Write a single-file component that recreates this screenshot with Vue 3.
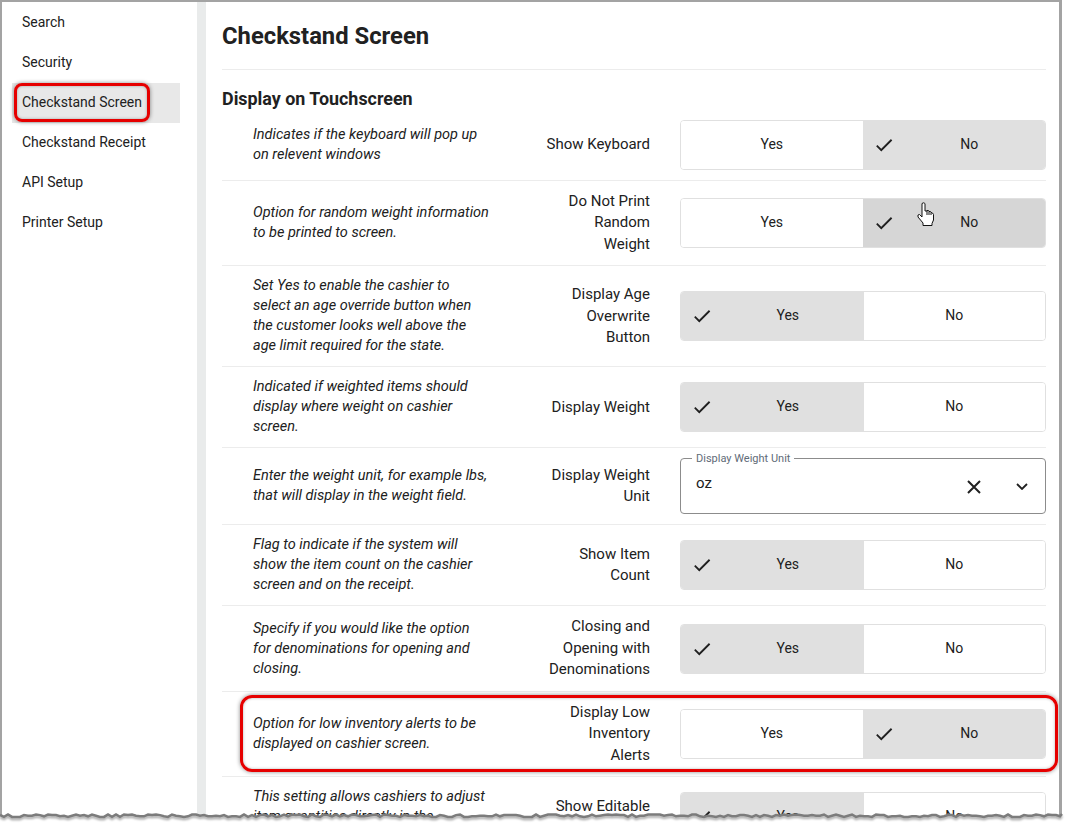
<script setup>
const navItems = ['Search', 'Security', 'Checkstand Screen', 'Checkstand Receipt', 'API Setup', 'Printer Setup']

const settings = [
  { text: 'Indicates if the keyboard will pop up on relevent windows', label: 'Show Keyboard', value: 'No' },
  { text: 'Option for random weight information to be printed to screen.', label: 'Do Not Print Random Weight', value: 'No', hover: true },
  { text: 'Set Yes to enable the cashier to select an age override button when the customer looks well above the age limit required for the state.', label: 'Display Age Overwrite Button', value: 'Yes' },
  { text: 'Indicated if weighted items should display where weight on cashier screen.', label: 'Display Weight', value: 'Yes' },
  { text: 'Enter the weight unit, for example lbs, that will display in the weight field.', label: 'Display Weight Unit', select: 'oz' },
  { text: 'Flag to indicate if the system will show the item count on the cashier screen and on the receipt.', label: 'Show Item Count', value: 'Yes' },
  { text: 'Specify if you would like the option for denominations for opening and closing.', label: 'Closing and Opening with Denominations', value: 'Yes' },
  { text: 'Option for low inventory alerts to be displayed on cashier screen.', label: 'Display Low Inventory Alerts', value: 'No' },
  { text: 'This setting allows cashiers to adjust item quantities directly in the checkstand screen.', label: 'Show Editable Quantity', value: 'Yes' }
]

// rough torn paper edge along the bottom of the screenshot
function tornEdge() {
  let seed = 7
  let d = 'M0 15'
  for (let x = 4; x < 1062; x += 4) {
    seed = (seed * 137 + 59) % 251
    d += ` L${x} ${14.5 + (seed % 5) * 0.6}`
  }
  return d + ' L1062 14'
}
const edge = tornEdge()
</script>

<template>
  <div class="page">
    <div class="frame">
      <aside class="sidebar">
        <a
          v-for="item in navItems"
          :key="item"
          class="nav-item"
          :class="{ active: item === 'Checkstand Screen' }"
        >{{ item }}</a>
      </aside>

      <main class="content">
        <h1>Checkstand Screen</h1>
        <h2>Display on Touchscreen</h2>

        <div v-for="s in settings" :key="s.label" class="row">
          <p class="desc">{{ s.text }}</p>
          <div class="label">{{ s.label }}</div>

          <fieldset v-if="s.select" class="select">
            <legend>{{ s.label }}</legend>
            <span class="select-value">{{ s.select }}</span>
            <svg class="clear-icon" viewBox="0 0 14 14" width="14" height="14">
              <path d="M1 1 L13 13 M13 1 L1 13" />
            </svg>
            <svg class="chevron-icon" viewBox="0 0 12 7" width="12" height="7">
              <path d="M1 1 L6 6 L11 1" />
            </svg>
          </fieldset>

          <div v-else class="toggle" :class="{ hover: s.hover }">
            <button
              v-for="opt in ['Yes', 'No']"
              :key="opt"
              class="toggle-btn"
              :class="{ on: s.value === opt }"
            >
              <svg v-if="s.value === opt" class="check" viewBox="0 0 24 24" width="22" height="22">
                <path d="M9 16.17L4.83 12l-1.41 1.41L9 19 21 7l-1.41-1.41z" />
              </svg>
              <span class="toggle-text">{{ opt }}</span>
            </button>
          </div>
        </div>
      </main>

      <!-- annotations drawn on top of the screenshot -->
      <div class="callout callout-nav"></div>
      <div class="callout callout-row"></div>

      <svg class="cursor" viewBox="0 0 18 24" width="18" height="24">
        <path d="M5.5 1 C6.5 0.5 8 1 8 2 L8 9 L10 9 L10 8.5 L11.5 8.5 L12 9.5 L13.5 9.5 L14 10.5 L15.5 11 L16.5 12.5 L16.5 18 L15 21.5 L15 23.5 L6 23.5 L6 21 L1 15 L1 13 L2.5 12.5 L5 15 L5 2 Z" />
        <path class="cursor-lines" d="M10 9 L10 13 M12 9.5 L12 13 M14 10.5 L14 13" />
      </svg>
    </div>

    <svg class="torn" viewBox="0 0 1071 29" width="1071" height="29">
      <path class="torn-fill" :d="edge + ' L1071 14 L1071 29 L0 29 Z'" />
      <path class="torn-line" :d="edge" />
    </svg>
  </div>
</template>

<style>
html, body {
  margin: 0;
  background: #fff;
  overflow: hidden;
}
</style>

<style scoped>
.page {
  position: relative;
  width: 1071px;
  height: 829px;
  overflow: hidden;
  background: #fff;
  font-family: Roboto, "Liberation Sans", sans-serif;
  color: #212121;
}

.frame {
  position: relative;
  box-sizing: border-box;
  width: 1062px;
  height: 829px;
  display: flex;
  overflow: hidden;
  background: #fff;
  border: 2px solid #a3a3a3;
  border-right-width: 3px;
  border-bottom: none;
}

.sidebar {
  box-sizing: border-box;
  width: 195px;
  flex-shrink: 0;
  padding: 1px 17px 0 10px;
}

.nav-item {
  display: block;
  height: 40px;
  line-height: 38px;
  padding-left: 10px;
  font-size: 14px;
}

.nav-item.active {
  background: #e8e8e8;
}

.content {
  flex: 1;
  border-left: 9px solid #e9ebeb;
  padding: 0 13px 0 16px;
  min-width: 0;
}

h1 {
  margin: 0;
  height: 67px;
  line-height: 69px;
  font-size: 23.8px;
  font-weight: 700;
  border-bottom: 1px solid #ececec;
}

h2 {
  margin: 0;
  height: 40px;
  padding-top: 18px;
  box-sizing: border-box;
  line-height: 22px;
  font-size: 17.9px;
  font-weight: 700;
}

.row {
  display: flex;
  align-items: center;
  padding: 10px 0;
  border-bottom: 1px solid #ececec;
}

.desc {
  width: 237px;
  flex-shrink: 0;
  margin: 0 1px 0 31px;
  font-size: 14.5px;
  font-style: italic;
  line-height: 20px;
}

.label {
  width: 104px;
  flex-shrink: 0;
  margin-left: 55px;
  margin-right: 30px;
  text-align: right;
  font-size: 15px;
  line-height: 21.45px;
}

.toggle {
  width: 366px;
  height: 50px;
  box-sizing: border-box;
  flex-shrink: 0;
  display: flex;
  border: 1px solid #e0e0e0;
  border-radius: 4px;
  overflow: hidden;
}

.toggle-btn {
  flex: 1;
  display: flex;
  align-items: center;
  padding: 0;
  border: none;
  background: #fff;
  font: inherit;
  font-size: 14px;
  color: #212121;
}

.toggle-btn.on {
  background: #e0e0e0;
  padding-right: 1px;
}

.toggle.hover .toggle-btn.on {
  background: #d6d6d6;
}

.toggle-text {
  flex: 1;
  text-align: center;
  padding-bottom: 2px;
}

.check {
  margin-left: 10px;
  fill: #212121;
}

.select {
  width: 366px;
  height: 61px;
  box-sizing: border-box;
  flex-shrink: 0;
  margin: -5px 0 0;
  padding: 0 0 4px 15px;
  display: flex;
  align-items: center;
  border: 1px solid #8c8c8c;
  border-radius: 4px;
  min-inline-size: 0;
}

.select legend {
  padding: 0 4px;
  margin-left: -4px;
  font-size: 11px;
  line-height: 11px;
  color: #5f6b78;
}

.select-value {
  flex: 1;
  font-size: 15px;
  margin-top: -8px;
}

.clear-icon path,
.chevron-icon path {
  fill: none;
  stroke: #212121;
}

.clear-icon path {
  stroke-width: 2;
}

.chevron-icon path {
  stroke-width: 1.8;
}

.clear-icon {
  margin-right: 35px;
}

.chevron-icon {
  margin-right: 17px;
}

.callout {
  position: absolute;
  box-sizing: border-box;
  border: 3px solid #e60000;
  border-radius: 8px;
  box-shadow: 0 0 4px rgba(0, 0, 0, 0.45), inset 0 0 3px rgba(0, 0, 0, 0.3);
  pointer-events: none;
}

.callout-nav {
  left: 12px;
  top: 81px;
  width: 136px;
  height: 39px;
}

.callout-row {
  left: 238px;
  top: 693px;
  width: 818px;
  height: 77px;
  border-radius: 12px;
}

.cursor {
  position: absolute;
  left: 915px;
  top: 200px;
}

.cursor path {
  fill: #fff;
  stroke: #111;
  stroke-width: 1;
}

.cursor .cursor-lines {
  fill: none;
}

.torn {
  position: absolute;
  left: 0;
  bottom: 0;
}

.torn-fill {
  fill: #fff;
}

.torn-line {
  fill: none;
  stroke: #7c7c7c;
  stroke-width: 2.5;
  filter: drop-shadow(0 2px 1px rgba(0, 0, 0, 0.35)) blur(0.7px);
}
</style>
